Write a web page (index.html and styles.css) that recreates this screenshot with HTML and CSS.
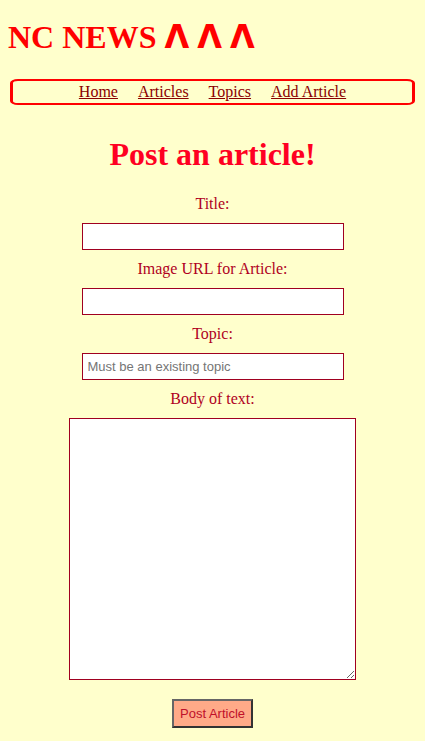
FILE: index.html
```html
<!DOCTYPE html>
<html lang="en">
<head>
<meta charset="utf-8">
<title>NC News</title>
<link rel="stylesheet" href="styles.css">
</head>
<body>
<header class="header">
  <h1 class="logo">NC NEWS <span class="carets">ᐱ ᐱ ᐱ</span></h1>
  <nav class="nav">
    <a href="#" class="nav-link">Home</a>
    <a href="#" class="nav-link">Articles</a>
    <a href="#" class="nav-link">Topics</a>
    <a href="#" class="nav-link">Add Article</a>
  </nav>
</header>
<main class="main">
  <h2 class="page-title">Post an article!</h2>
  <form class="post-form">
    <label class="field-label" for="title">Title:</label>
    <input class="field-input" id="title" type="text">
    <label class="field-label" for="img">Image URL for Article:</label>
    <input class="field-input" id="img" type="text">
    <label class="field-label" for="topic">Topic:</label>
    <input class="field-input" id="topic" type="text" placeholder="Must be an existing topic">
    <label class="field-label" for="body">Body of text:</label>
    <textarea class="field-textarea" id="body"></textarea>
    <button class="submit-btn" type="button">Post Article</button>
  </form>
</main>
</body>
</html>
```
FILE: styles.css
```css
html { background: #ffffcc; }
body {
  margin: 8px;
  font-family: "Liberation Serif", serif;
  background: #ffffcc;
}
.logo {
  margin: 11px 0 0;
  font-size: 32px;
  line-height: 37px;
  font-weight: bold;
  color: #ff0000;
}
.carets {
  font-family: "Liberation Serif", "DejaVu Sans", sans-serif;
  font-size: 32px;
}
.nav {
  margin: 23px 2px 0;
  height: 22px;
  border: 2px solid #ff0000;
  border-left-width: 3px;
  border-right-width: 3px;
  border-radius: 8px / 4px;
  display: flex;
  justify-content: center;
  align-items: center;
  gap: 20px;
  font-size: 16px;
}
.nav-link {
  color: #8b0000;
  text-decoration: underline;
}
.main { text-align: center; }
.page-title {
  margin: 31px 0 0;
  font-size: 32px;
  line-height: 37px;
  color: #ff0022;
}
.post-form {
  display: flex;
  flex-direction: column;
  align-items: center;
}
.field-label {
  display: block;
  font-size: 16px;
  line-height: 18px;
  color: #b0001e;
}
.post-form .field-label:first-child { margin-top: 22px; }
.field-input {
  box-sizing: border-box;
  margin-top: 10px;
  width: 262px;
  height: 27px;
  border: 1px solid #a00020;
  padding: 2px 5px;
  background: #fff;
  font-family: "Liberation Sans", Arial, sans-serif;
  font-size: 13px;
}
.field-input::placeholder { color: #757575; }
.field-input + .field-label { margin-top: 10px; }
.field-textarea {
  box-sizing: border-box;
  margin-top: 10px;
  width: 287px;
  height: 262px;
  border: 1px solid #a00020;
  background: #fff;
  resize: vertical;
}
.submit-btn {
  box-sizing: border-box;
  margin-top: 19px;
  width: 81px;
  height: 29px;
  background: #ffaa88;
  border: 2px solid #333;
  border-top-color: #666;
  border-left-color: #666;
  color: #c0102a;
  font-family: "Liberation Sans", Arial, sans-serif;
  font-size: 13px;
  padding: 0;
}
```
